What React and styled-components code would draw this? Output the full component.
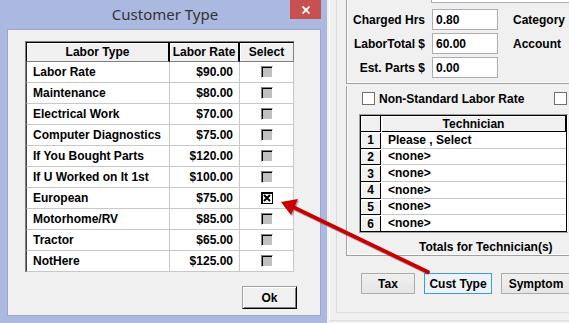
import React from 'react'
import styled, { createGlobalStyle } from 'styled-components'

const GlobalStyle = createGlobalStyle`
    html, body {
        margin: 0;
        padding: 0;
    }
    body {
        background: #f0f0f0;
        font-family: "Liberation Sans", Arial, sans-serif;
        overflow: hidden;
    }
`

const laborRows = [
    { name: 'Labor Rate', rate: '$90.00' },
    { name: 'Maintenance', rate: '$80.00' },
    { name: 'Electrical Work', rate: '$70.00' },
    { name: 'Computer Diagnostics', rate: '$75.00' },
    { name: 'If You Bought Parts', rate: '$120.00' },
    { name: 'If U Worked on It 1st', rate: '$100.00' },
    { name: 'European', rate: '$75.00', checked: true },
    { name: 'Motorhome/RV', rate: '$85.00' },
    { name: 'Tractor', rate: '$65.00' },
    { name: 'NotHere', rate: '$125.00' },
]

const technicians = ['Please , Select', '<none>', '<none>', '<none>', '<none>', '<none>']

const fields = [
    { label: 'Charged Hrs', value: '0.80', side: 'Category' },
    { label: 'LaborTotal $', value: '60.00', side: 'Account' },
    { label: 'Est. Parts $', value: '0.00', side: '' },
]

const CloseIcon = () => (
    <svg width="8" height="8" viewBox="0 0 8 8">
        <path d="M0.5 0.5 L7.5 7.5 M7.5 0.5 L0.5 7.5" stroke="#fff" strokeWidth="1.8" />
    </svg>
)

const CheckMark = () => (
    <svg width="8" height="8" viewBox="0 0 8 8">
        <path d="M1 1 L7 7 M7 1 L1 7" stroke="#000" strokeWidth="2" />
    </svg>
)

const Arrow = () => (
    <ArrowSvg width="569" height="323" viewBox="0 0 569 323">
        <g transform="translate(1.2 1.6)" opacity="0.3">
            <line x1="428" y1="272" x2="293" y2="207" stroke="#300" strokeWidth="3.8" />
            <polygon points="281,202 298,199 291,215" fill="#300" />
        </g>
        <line x1="428" y1="272" x2="293" y2="207" stroke="#c80000" strokeWidth="3.8" strokeLinecap="round" />
        <polygon points="281,202 298,199 291,215" fill="#c80000" />
    </ArrowSvg>
)

const App = () => (
    <>
        <GlobalStyle />
        <Desktop>
            <BackWindow>
                <OuterFrame>
                    <InnerFrame>
                        <FieldsGroup>
                            <TextBoxStub />
                            <FieldsGrid>
                                {fields.map((f) => (
                                    <React.Fragment key={f.label}>
                                        <FieldLabel>{f.label}</FieldLabel>
                                        <TextBox>{f.value}</TextBox>
                                        <SideLabel>{f.side}</SideLabel>
                                    </React.Fragment>
                                ))}
                            </FieldsGrid>
                        </FieldsGroup>
                        <TechGroup>
                            <CheckRow>
                                <WinCheck />
                                <span>Non-Standard Labor Rate</span>
                                <WinCheck $push />
                            </CheckRow>
                            <TechGrid>
                                <FixedCell />
                                <FixedCell $head>Technician</FixedCell>
                                {technicians.map((t, i) => (
                                    <React.Fragment key={i}>
                                        <FixedCell>{i + 1}</FixedCell>
                                        <TechCell>{t}</TechCell>
                                    </React.Fragment>
                                ))}
                            </TechGrid>
                            <TotalsLabel>Totals for Technician(s)</TotalsLabel>
                        </TechGroup>
                        <ButtonRow>
                            <WinButton $w={54}>Tax</WinButton>
                            <WinButton $w={68} $focused>Cust Type</WinButton>
                            <WinButton $w={70}>Symptom</WinButton>
                        </ButtonRow>
                    </InnerFrame>
                </OuterFrame>
            </BackWindow>

            <Dialog>
                <TitleBar>
                    <Title>Customer Type</Title>
                    <CloseButton>
                        <CloseIcon />
                    </CloseButton>
                </TitleBar>
                <DialogBody>
                    <LaborGrid>
                        <HeadCell $first>Labor Type</HeadCell>
                        <HeadCell>Labor Rate</HeadCell>
                        <HeadCell $last>Select</HeadCell>
                        {laborRows.map((r) => (
                            <React.Fragment key={r.name}>
                                <BodyCell $first>{r.name}</BodyCell>
                                <BodyCell $right>{r.rate}</BodyCell>
                                <BodyCell $center>
                                    <GridCheck $checked={r.checked}>{r.checked && <CheckMark />}</GridCheck>
                                </BodyCell>
                            </React.Fragment>
                        ))}
                    </LaborGrid>
                    <OkButton>Ok</OkButton>
                </DialogBody>
            </Dialog>

            <Arrow />
        </Desktop>
    </>
)

export default App

const Desktop = styled.div`
    position: relative;
    width: 569px;
    height: 323px;
    overflow: hidden;
    background: #f0f0f0;
    font-size: 12px;
    font-weight: bold;
    color: #000;
`

/* ---------- window behind the dialog ---------- */

const BackWindow = styled.div`
    height: 100%;
    padding-left: 329px;
    box-sizing: border-box;
`

const OuterFrame = styled.div`
    width: 242px;
    height: 321px;
    box-sizing: border-box;
    border-left: 1px solid #fcfcfc;
    border-bottom: 1px solid #dcdcdc;
    padding-left: 6px;
`

const InnerFrame = styled.div`
    height: 313px;
    box-sizing: border-box;
    border-left: 1px solid #dcdcdc;
    border-bottom: 1px solid #dcdcdc;
    padding-left: 9px;
    display: flex;
    flex-direction: column;
`

const FieldsGroup = styled.div`
    height: 84px;
    box-sizing: border-box;
    border-left: 1px solid #a0a0a0;
    border-bottom: 1px solid #a0a0a0;
    box-shadow: inset 1px -1px 0 #fff;
`

const TextBoxStub = styled.div`
    margin-left: 84px;
    height: 2px;
    border-left: 1px solid #abadb3;
    border-bottom: 1px solid #abadb3;
    background: #fff;
`

const FieldsGrid = styled.div`
    display: grid;
    grid-template-columns: 78px 66px auto;
    grid-auto-rows: 21px;
    column-gap: 7px;
    row-gap: 3px;
    padding-top: 6px;
    align-items: center;
    white-space: nowrap;
`

const FieldLabel = styled.div`
    text-align: right;
`

const TextBox = styled.div`
    height: 21px;
    box-sizing: border-box;
    border: 1px solid #abadb3;
    background: #fff;
    padding-left: 3px;
    display: flex;
    align-items: center;
`

const SideLabel = styled.div`
    padding-left: 8px;
`

const TechGroup = styled.div`
    margin-top: 2px;
    height: 170px;
    box-sizing: border-box;
    border-left: 1px solid #a0a0a0;
    border-bottom: 1px solid #a0a0a0;
    box-shadow: inset 1px -1px 0 #fff;
    display: flex;
    flex-direction: column;
`

const CheckRow = styled.div`
    display: flex;
    align-items: center;
    gap: 4px;
    height: 13px;
    margin-top: 6px;
    padding-left: 15px;
    padding-right: 4px;
    white-space: nowrap;
`

const WinCheck = styled.span`
    width: 13px;
    height: 13px;
    flex: none;
    box-sizing: border-box;
    border: 1px solid #707070;
    background: #fff;
    margin-left: ${({ $push }) => ($push ? 'auto' : '0')};
`

const TechGrid = styled.div`
    margin-top: 9px;
    margin-left: 12px;
    width: 209px;
    box-sizing: border-box;
    display: grid;
    grid-template-columns: 22px 185px;
    grid-template-rows: 17px repeat(6, 16.67px);
    border: 1px solid #a0a0a0;
    border-right: none;
    outline: 1px solid #000;
    outline-offset: -2px;
    background: #fff;
`

const FixedCell = styled.div`
    background: #f0f0f0;
    box-sizing: border-box;
    border-right: ${({ $head }) => ($head ? '2px' : '1px')} solid #000;
    border-bottom: 1px solid #000;
    box-shadow: inset 1px 1px 0 #fff;
    margin: ${({ $head }) => ($head ? '1px 0 0 0' : '1px 1px 0 1px')};
    display: flex;
    align-items: center;
    justify-content: center;
    line-height: 1;
`

const TechCell = styled.div`
    background: #fff;
    border-bottom: 1px solid #c8c8c8;
    padding-left: 6px;
    display: flex;
    align-items: center;
    line-height: 1;
`

const TotalsLabel = styled.div`
    margin-top: 7px;
    padding-left: 72px;
`

const ButtonRow = styled.div`
    display: flex;
    gap: 9px;
    margin-top: 17px;
    padding-left: 15px;
`

const WinButton = styled.div`
    width: ${({ $w }) => $w}px;
    height: 21px;
    flex: none;
    box-sizing: border-box;
    border: 1px solid ${({ $focused }) => ($focused ? '#3c9be8' : '#acacac')};
    background: ${({ $focused }) => ($focused ? '#eef3f8' : 'linear-gradient(#f0f0f0, #e5e5e5)')};
    display: flex;
    align-items: center;
    justify-content: center;
`

/* ---------- Customer Type dialog ---------- */

const Dialog = styled.div`
    position: absolute;
    left: 0;
    top: 0;
    width: 327px;
    height: 323px;
    box-sizing: border-box;
    background: #abb8df;
    padding: 0 6px 7px 7px;
    display: flex;
    flex-direction: column;
`

const TitleBar = styled.div`
    position: relative;
    height: 29px;
    flex: none;
    display: flex;
    align-items: center;
    justify-content: center;
`

const Title = styled.div`
    font-family: "Noto Sans", "Open Sans", sans-serif;
    font-weight: normal;
    font-size: 15px;
    color: #333;
    margin-left: 2px;
    margin-top: -1px;
`

const CloseButton = styled.div`
    position: absolute;
    top: 0;
    right: 0;
    width: 31px;
    height: 19px;
    background: #c75050;
    display: flex;
    align-items: center;
    justify-content: center;
`

const DialogBody = styled.div`
    flex: 1;
    background: #f0f0f0;
    border: 1px solid #9aa6cc;
    padding: 11px 23px 0 17px;
    display: flex;
    flex-direction: column;
`

const LaborGrid = styled.div`
    display: grid;
    grid-template-columns: 144px 70px 54px;
    grid-template-rows: 20px repeat(10, 21px);
    width: 269px;
    box-sizing: border-box;
    border-left: 1px solid #808080;
    border-top: 1px solid #808080;
`

const HeadCell = styled.div`
    box-sizing: border-box;
    background: #f0f0f0;
    border-top: 1px solid #000;
    border-left: ${({ $first }) => ($first ? '1px solid #000' : 'none')};
    border-right: ${({ $last }) => ($last ? '1px solid #808080' : '2px solid #000')};
    border-bottom: 1px solid #808080;
    box-shadow: inset 1px 1px 0 #fff;
    display: flex;
    align-items: center;
    justify-content: center;
    white-space: nowrap;
`

const BodyCell = styled.div`
    box-sizing: border-box;
    background: #fff;
    border-left: ${({ $first }) => ($first ? '1px solid #404040' : 'none')};
    border-right: 1px solid #c8c8c8;
    border-bottom: 1px solid #c8c8c8;
    display: flex;
    align-items: center;
    justify-content: ${({ $right, $center }) => ($right ? 'flex-end' : $center ? 'center' : 'flex-start')};
    padding: ${({ $right }) => ($right ? '0 6px 0 0' : '0 0 0 6px')};
    white-space: nowrap;
`

const GridCheck = styled.span`
    width: 12px;
    height: 12px;
    box-sizing: border-box;
    margin-left: -6px;
    display: flex;
    align-items: center;
    justify-content: center;
    background: ${({ $checked }) => ($checked ? '#fff' : '#c0c0c0')};
    border-top: 1px solid ${({ $checked }) => ($checked ? '#000' : '#808080')};
    border-left: 1px solid ${({ $checked }) => ($checked ? '#000' : '#808080')};
    border-right: 1px solid ${({ $checked }) => ($checked ? '#000' : '#fff')};
    border-bottom: 1px solid ${({ $checked }) => ($checked ? '#000' : '#fff')};
    box-shadow: inset 1px 1px 0 #000;
`

const OkButton = styled.div`
    align-self: flex-end;
    margin-top: 14px;
    width: 55px;
    height: 23px;
    box-sizing: border-box;
    background: #f0f0f0;
    border: 1px solid;
    border-color: #a0a0a0 #000 #000 #a0a0a0;
    box-shadow: inset 1px 1px 0 #fff, inset -1px -1px 0 #808080;
    display: flex;
    align-items: center;
    justify-content: center;
`

const ArrowSvg = styled.svg`
    position: absolute;
    left: 0;
    top: 0;
    pointer-events: none;
`
